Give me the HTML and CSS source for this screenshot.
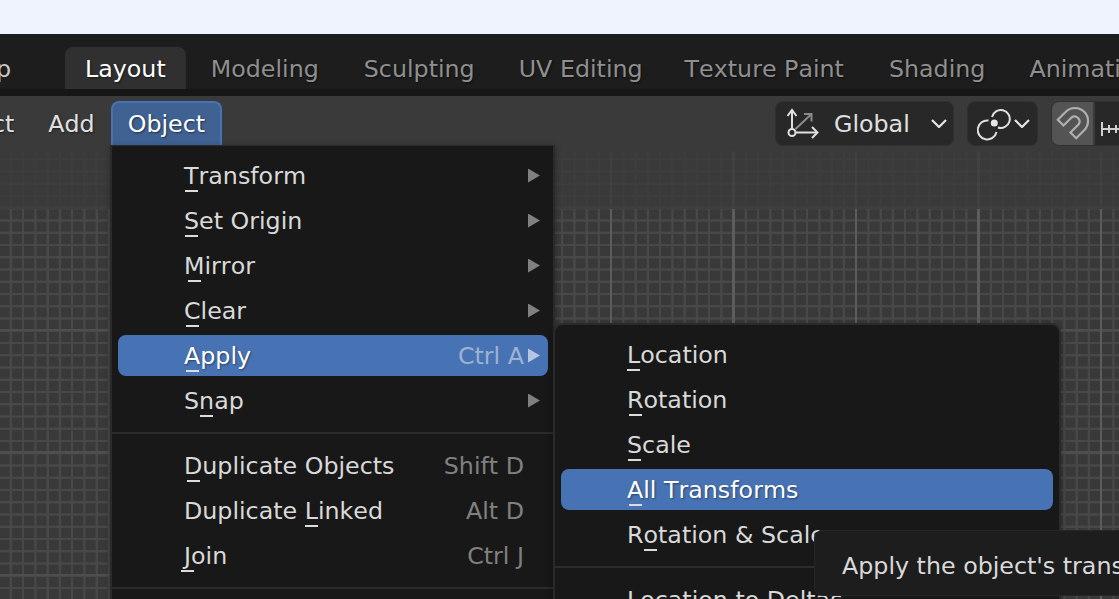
FILE: index.html
```html
<!DOCTYPE html>
<html lang="en">
<head>
    <meta charset="UTF-8">
    <title>Blender - Object menu</title>
    <link rel="stylesheet" href="styles.css">
</head>
<body>
<div class="browser-strip"></div>
<div class="app">
    <div class="topbar">
        <span class="top-help">Help</span>
        <div class="tabs">
            <span class="tab active">Layout</span>
            <span class="tab">Modeling</span>
            <span class="tab">Sculpting</span>
            <span class="tab">UV Editing</span>
            <span class="tab">Texture Paint</span>
            <span class="tab">Shading</span>
            <span class="tab">Animation</span>
        </div>
    </div>
    <div class="viewport">
        <div class="header-fade"></div>
        <div class="header">
            <div class="header-menus">
                <span class="header-menu">Select</span>
                <span class="header-menu">Add</span>
                <span class="header-menu open">Object</span>
            </div>
            <div class="header-tools">
                <div class="dropdown dropdown-global">
                    <svg class="icon-axes" width="36" height="36" viewBox="0 0 36 36" fill="none" stroke="#e0e0e0" stroke-width="2">
                        <path d="M9.500 23L25 8.500M18 8H25.500V15.500" stroke="#8a8a8a"/>
                        <path d="M6 23V4"/>
                        <path d="M1.500 10L6 4L10.500 10"/>
                        <circle cx="6" cy="26.500" r="3.500"/>
                        <path d="M10 26.500H31"/>
                        <path d="M26 21L31.500 26.500L26 32"/>
                    </svg>
                    <span class="dropdown-label">Global</span>
                    <svg class="chevron" width="16" height="9" viewBox="0 0 16 9" fill="none" stroke="#e6e6e6" stroke-width="2.200"><path d="M1 1L8 8L15 1"/></svg>
                </div>
                <div class="dropdown dropdown-pivot">
                    <svg width="34" height="34" viewBox="0 0 34 34" fill="none" stroke="#e0e0e0" stroke-width="2">
                        <path d="M15 10A9 9 0 1 1 21 20.500"/>
                        <path d="M11.500 13.500A9.500 9.500 0 1 0 19.500 25"/>
                        <circle cx="17.300" cy="16" r="3.500" fill="#e6e6e6" stroke="none"/>
                    </svg>
                    <svg class="chevron" width="16" height="9" viewBox="0 0 16 9" fill="none" stroke="#e6e6e6" stroke-width="2.200"><path d="M1 1L8 8L15 1"/></svg>
                </div>
                <div class="snap-group">
                    <div class="snap-magnet">
                        <svg width="34" height="36" viewBox="0 0 34 36" fill="none" stroke="#b0b0b0" stroke-width="2.200">
                            <path d="M1.800 13.800L9.800 5.800A13 13 0 0 1 28.200 24.200L20.200 32.200L14.500 26.500L22.500 18.500A5 5 0 0 0 15.500 11.500L7.500 19.500Z"/>
                        </svg>
                    </div>
                    <div class="snap-type">
                        <svg width="26" height="16" viewBox="0 0 26 16" fill="none" stroke="#d0d0d0" stroke-width="2"><path d="M2 1V15M9 4V12M16 4V12M2 8H26"/></svg>
                    </div>
                </div>
            </div>
        </div>

        <div class="menu menu-object">
            <div class="menu-row"><span class="menu-label"><span class="key">T</span>ransform</span><span class="arrow"></span></div>
            <div class="menu-row"><span class="menu-label"><span class="key">S</span>et Origin</span><span class="arrow"></span></div>
            <div class="menu-row"><span class="menu-label"><span class="key">M</span>irror</span><span class="arrow"></span></div>
            <div class="menu-row"><span class="menu-label"><span class="key">C</span>lear</span><span class="arrow"></span></div>
            <div class="menu-row hover"><span class="menu-label"><span class="key">A</span>pply</span><span class="shortcut">Ctrl A</span><span class="arrow"></span></div>
            <div class="menu-row"><span class="menu-label">S<span class="key">n</span>ap</span><span class="arrow"></span></div>
            <div class="menu-sep"></div>
            <div class="menu-row"><span class="menu-label"><span class="key">D</span>uplicate Objects</span><span class="shortcut">Shift D</span><span class="arrow-gap"></span></div>
            <div class="menu-row"><span class="menu-label">Duplicate <span class="key">L</span>inked</span><span class="shortcut">Alt D</span><span class="arrow-gap"></span></div>
            <div class="menu-row"><span class="menu-label"><span class="key">J</span>oin</span><span class="shortcut">Ctrl J</span><span class="arrow-gap"></span></div>
            <div class="menu-sep"></div>
        </div>

        <div class="menu menu-apply">
            <div class="menu-row"><span class="menu-label"><span class="key">L</span>ocation</span></div>
            <div class="menu-row"><span class="menu-label"><span class="key">R</span>otation</span></div>
            <div class="menu-row"><span class="menu-label"><span class="key">S</span>cale</span></div>
            <div class="menu-row hover"><span class="menu-label"><span class="key">A</span>ll Transforms</span></div>
            <div class="menu-row"><span class="menu-label">R<span class="key">o</span>tation &amp; Scale</span></div>
            <div class="menu-sep"></div>
            <div class="menu-row"><span class="menu-label">Location to Deltas</span></div>
        </div>

        <div class="tooltip">Apply the object's transformation</div>
    </div>
</div>
</body>
</html>
```

FILE: styles.css
```css
html, body {
    margin: 0;
    padding: 0;
    height: 100%;
    overflow: hidden;
    background: #1d1d1d;
    font-family: 'DejaVu Sans', sans-serif;
    font-kerning: none;
}
.browser-strip {
    height: 34px;
    background: #eff3fd;
}
.app {
    height: 565px;
    display: flex;
    flex-direction: column;
    overflow: hidden;
}

/* top bar */
.topbar {
    height: 55px;
    flex: none;
    display: flex;
    align-items: flex-end;
    background: #1d1d1d;
    border-bottom: 7px solid #161616;
    color: #8f8f8f;
    font-size: 23.750px;
    white-space: nowrap;
}
.top-help {
    width: 65px;
    margin-left: -43px;
    flex: none;
    height: 42px;
    line-height: 44px;
    color: #c8c8c8;
}
.tabs {
    display: flex;
    margin-left: 43px;
}
.tab {
    height: 42px;
    line-height: 45px;
    padding: 0 20px;
    margin-right: 4px;
    border-radius: 8px 8px 0 0;
    text-shadow: 1px 1px 2px rgba(0, 0, 0, 0.5);
}
.tab:nth-child(1), .tab:nth-child(2), .tab:nth-child(5) {
    margin-right: 5px;
}
.tab:nth-child(4) {
    margin-right: 2px;
}
.tab.active {
    background: #303030;
    color: #fff;
}

/* 3d viewport */
.viewport {
    position: relative;
    flex: 1;
    background-color: #393939;
    background-image:
        repeating-linear-gradient(90deg, transparent 0 119.5px, #5c5c5c 120px 122px, transparent 122.5px),
        repeating-linear-gradient(180deg, transparent 0 110px, #4e4e4e 110.5px 112.5px, transparent 113px 122.5px),
        repeating-linear-gradient(90deg, transparent 0 9.25px, #484848 10.25px 11.75px, transparent 12.25px),
        repeating-linear-gradient(180deg, transparent 0 0.5px, #484848 1.25px 2.75px, transparent 3.5px 12.25px);
}
.header-fade {
    position: absolute;
    left: 0;
    right: 0;
    top: 0;
    height: 113px;
    background: linear-gradient(#3a3a3a 54px, rgba(58, 58, 58, 0.8) 57px);
}
.header {
    position: relative;
    display: flex;
    justify-content: space-between;
    height: 50px;
    padding-top: 5px;
    box-sizing: border-box;
    font-size: 23.750px;
    color: #e0e0e0;
}
.header-menus {
    display: flex;
    margin-left: -76px;
    height: 44px;
}
.header-menu {
    padding: 0 17px;
    line-height: 46px;
    text-shadow: 1px 1px 2px rgba(0, 0, 0, 0.5);
}
.header-menu:nth-child(2) {
    padding-right: 16px;
}
.header-menu.open {
    color: #fff;
    background: #3f6293;
    border: 2px solid #4772b3;
    border-bottom: none;
    border-radius: 8px 8px 0 0;
    padding: 0 15px;
    line-height: 43px;
    box-sizing: border-box;
}
.header-tools {
    display: flex;
    flex: none;
    gap: 13px;
    margin-right: -74px;
}
.dropdown {
    display: flex;
    flex: none;
    align-items: center;
    height: 45px;
    box-sizing: border-box;
    background: #282828;
    border: 1px solid #303030;
    border-radius: 8px;
}
.dropdown-global {
    width: 179px;
    padding: 0 6px 0 10px;
}
.dropdown-label {
    flex: 1;
    margin-left: 12px;
}
.dropdown-pivot {
    width: 71px;
    padding: 0 7px 0 9px;
    gap: 3px;
}
.snap-group {
    display: flex;
    flex: none;
    height: 45px;
    width: 142px;
    border-radius: 8px;
    overflow: hidden;
    border: 1px solid #303030;
    box-sizing: border-box;
    gap: 2px;
}
.snap-magnet {
    width: 41px;
    flex: none;
    background: #545454;
    display: flex;
    align-items: center;
    justify-content: center;
}
.snap-type {
    flex: 1;
    background: #282828;
    display: flex;
    align-items: center;
    padding: 10px 0 0 5px;
    box-sizing: border-box;
}

/* popup menus */
.menu {
    position: absolute;
    box-sizing: border-box;
    background: #181818;
    border: 2px solid #2a2a2a;
    color: #d9d9d9;
    font-size: 23.750px;
    box-shadow: 0 2px 6px rgba(0, 0, 0, 0.35);
}
.menu-object {
    left: 110px;
    top: 49px;
    width: 445px;
    height: 530px;
    padding: 9px 5px 8px 6px;
    border-top-width: 1px;
}
.menu-apply {
    left: 553px;
    top: 227px;
    width: 508px;
    height: 340px;
    padding: 9px 6px;
    border-radius: 10px 10px 0 0;
}
.menu-row {
    display: flex;
    align-items: center;
    height: 41px;
    margin-bottom: 4px;
    padding: 0 8px 0 66px;
    border-radius: 8px;
    white-space: nowrap;
}
.menu-label {
    flex: 1;
}
.menu-row.hover {
    background: #4772b3;
    color: #fff;
    text-shadow: 1px 1px 2px rgba(0, 0, 0, 0.4);
}
.shortcut {
    color: #808080;
}
.menu-row.hover .shortcut {
    color: #9db3d3;
    text-shadow: none;
}
.arrow {
    width: 12px;
    height: 14px;
    background: #808080;
    clip-path: polygon(0 0, 100% 50%, 0 100%);
    margin-left: 4px;
}
.menu-row.hover .arrow {
    background: #b5c6e3;
}
.arrow-gap {
    width: 12px;
    margin-left: 4px;
}
.key {
    position: relative;
}
.key::after {
    content: "";
    position: absolute;
    left: 50%;
    bottom: -2px;
    width: 13px;
    height: 2px;
    margin-left: -6.500px;
    background: #dcdcdc;
}
.menu-sep {
    height: 2px;
    background: #2c2c2c;
    margin: 11px -5px 11px -6px;
}
.tooltip {
    position: absolute;
    left: 814px;
    top: 434px;
    width: 420px;
    height: 66px;
    box-sizing: border-box;
    padding: 0 0 0 27px;
    line-height: 70px;
    font-size: 23.750px;
    white-space: nowrap;
    color: #d9d9d9;
    background: #1d1d1d;
    border: 1px solid #262626;
    border-radius: 8px;
}
```
